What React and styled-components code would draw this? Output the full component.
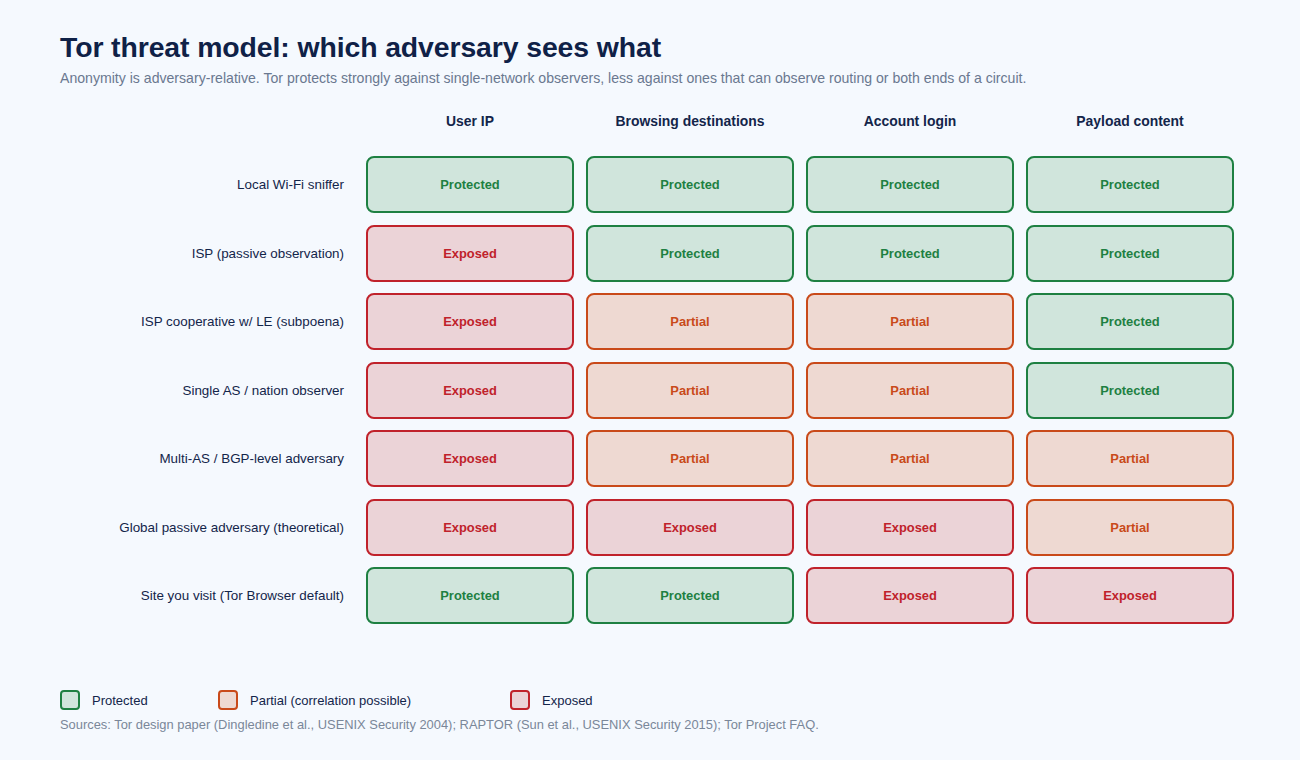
import React from "react";
import styled, { createGlobalStyle } from "styled-components";

const Global = createGlobalStyle`
  html, body { margin: 0; padding: 0; background: #f5f9fe; }
  body { font-family: "Liberation Sans", Arial, sans-serif; color: #13254a; }
`;

const Page = styled.div`
  width: 1300px;
  height: 760px;
  box-sizing: border-box;
  padding: 30px 60px 0 60px;
  background: #f5f9fe;
`;

const Title = styled.h1`
  margin: 0;
  font-size: 28.4px;
  line-height: 34px;
  font-weight: 700;
  color: #0f2147;
  letter-spacing: -0.1px;
`;

const Subtitle = styled.p`
  margin: 5px 0 0 0;
  font-size: 14.1px;
  line-height: 18px;
  color: #6a7890;
`;

const Grid = styled.div`
  margin-top: 25px;
  display: grid;
  grid-template-columns: 294px repeat(4, 208px);
  column-gap: 12px;
  row-gap: 11.5px;
`;

const ColHead = styled.div`
  font-size: 13.9px;
  font-weight: 700;
  text-align: center;
  color: #13254a;
  height: 18px;
  line-height: 18px;
  margin-bottom: 14.5px;
`;

const RowLabel = styled.div`
  font-size: 13.4px;
  text-align: right;
  color: #13254a;
  display: flex;
  align-items: center;
  justify-content: flex-end;
  padding-right: 10px;
`;

const palette = {
  Protected: { border: "#1e8042", bg: "#d0e5dc", text: "#1e8042" },
  Partial: { border: "#c94a1a", bg: "#eed9d2", text: "#c94a1a" },
  Exposed: { border: "#c0222b", bg: "#ebd3d7", text: "#c0222b" },
};

const Cell = styled.div`
  height: 57px;
  box-sizing: border-box;
  border: 2px solid ${(p) => palette[p.$status].border};
  background: ${(p) => palette[p.$status].bg};
  color: ${(p) => palette[p.$status].text};
  border-radius: 8px;
  display: flex;
  align-items: center;
  justify-content: center;
  font-size: 12.9px;
  font-weight: 700;
`;

const Legend = styled.div`
  margin-top: 66px;
  display: flex;
  align-items: center;
  height: 20px;
`;

const LegendItem = styled.div`
  display: flex;
  align-items: center;
  gap: 12px;
  width: ${(p) => p.$w}px;
  font-size: 13px;
  color: #13254a;
`;

const Swatch = styled.span`
  width: 20px;
  height: 20px;
  box-sizing: border-box;
  border-radius: 4px;
  border: 2px solid ${(p) => palette[p.$status].border};
  background: ${(p) => palette[p.$status].bg};
`;

const Sources = styled.div`
  margin-top: 7px;
  font-size: 12.9px;
  line-height: 16px;
  color: #7a8799;
`;

const cols = ["User IP", "Browsing destinations", "Account login", "Payload content"];
const rows = [
  ["Local Wi-Fi sniffer", ["Protected", "Protected", "Protected", "Protected"]],
  ["ISP (passive observation)", ["Exposed", "Protected", "Protected", "Protected"]],
  ["ISP cooperative w/ LE (subpoena)", ["Exposed", "Partial", "Partial", "Protected"]],
  ["Single AS / nation observer", ["Exposed", "Partial", "Partial", "Protected"]],
  ["Multi-AS / BGP-level adversary", ["Exposed", "Partial", "Partial", "Partial"]],
  ["Global passive adversary (theoretical)", ["Exposed", "Exposed", "Exposed", "Partial"]],
  ["Site you visit (Tor Browser default)", ["Protected", "Protected", "Exposed", "Exposed"]],
];

export default function App() {
  return (
    <Page>
      <Global />
      <Title>Tor threat model: which adversary sees what</Title>
      <Subtitle>
        Anonymity is adversary-relative. Tor protects strongly against single-network observers, less against ones that can observe routing or both ends of a circuit.
      </Subtitle>
      <Grid>
        <div />
        {cols.map((c) => (
          <ColHead key={c}>{c}</ColHead>
        ))}
        {rows.map(([label, cells]) => (
          <React.Fragment key={label}>
            <RowLabel>{label}</RowLabel>
            {cells.map((s, i) => (
              <Cell key={i} $status={s}>{s}</Cell>
            ))}
          </React.Fragment>
        ))}
      </Grid>
      <Legend>
        <LegendItem $w={158}><Swatch $status="Protected" />Protected</LegendItem>
        <LegendItem $w={292}><Swatch $status="Partial" />Partial (correlation possible)</LegendItem>
        <LegendItem $w={200}><Swatch $status="Exposed" />Exposed</LegendItem>
      </Legend>
      <Sources>
        Sources: Tor design paper (Dingledine et al., USENIX Security 2004); RAPTOR (Sun et al., USENIX Security 2015); Tor Project FAQ.
      </Sources>
    </Page>
  );
}
